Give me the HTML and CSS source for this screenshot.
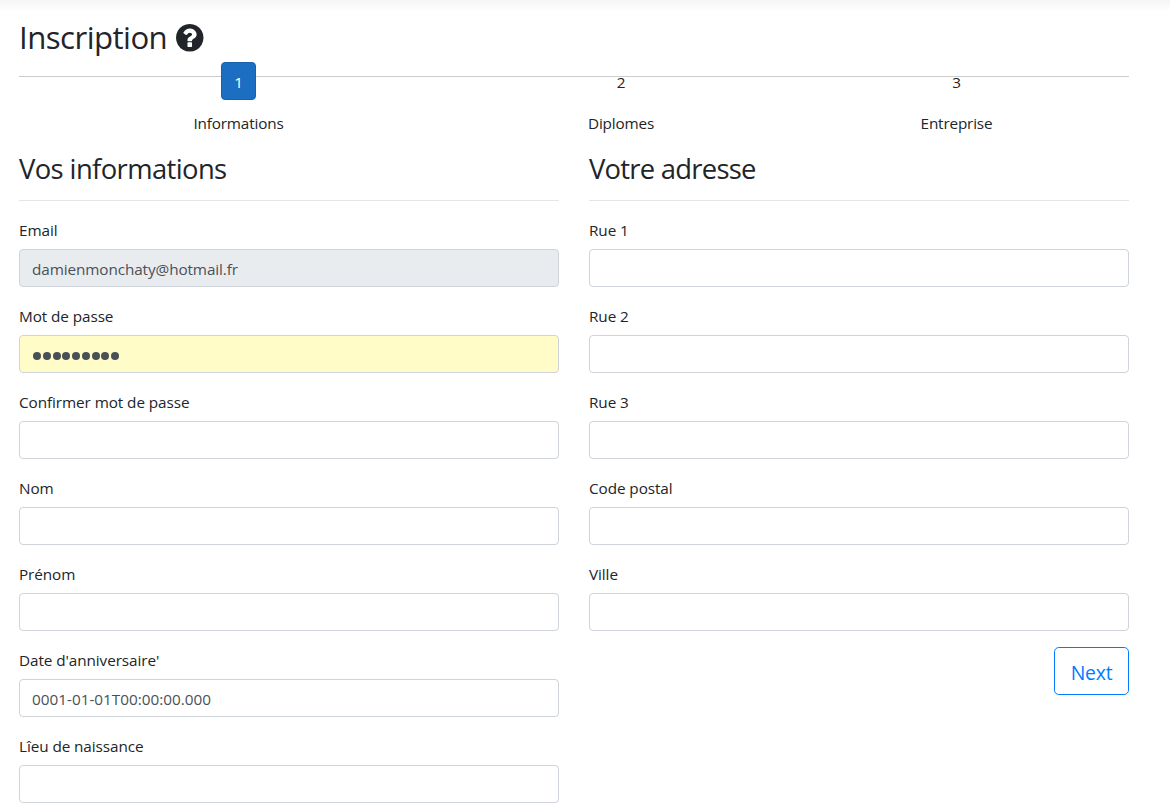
FILE: index.html
```html
<!DOCTYPE html>
<html lang="fr">
<head>
<meta charset="utf-8">
<title>Inscription</title>
<link rel="stylesheet" href="styles.css">
</head>
<body>
<main class="page">
  <h1 class="title"><span class="t-title">Inscription</span>
    <svg class="help" viewBox="128 128 1536 1536" aria-hidden="true"><path fill="currentColor" d="M1024 1376v-192q0-14-9-23t-23-9h-192q-14 0-23 9t-9 23v192q0 14 9 23t23 9h192q14 0 23-9t9-23zm256-672q0-88-55.500-163t-138.500-116-170-41q-243 0-371 213-15 24 8 42l132 100q7 6 19 6 16 0 25-12 53-68 86-92 34-24 86-24 48 0 85.500 26t37.500 59q0 38-20 61t-68 45q-63 28-115.500 86.500t-52.500 125.500v36q0 14 9 23t23 9h192q14 0 23-9t9-23q0-19 21.500-49.500t54.500-49.500q32-18 49-28.500t46-35 44.500-48 28-60.500 12.500-81zm384 192q0 209-103 385.500t-279.500 279.500-385.500 103-385.500-103-279.500-279.500-103-385.500 103-385.500 279.500-279.500 385.500-103 385.500 103 279.500 279.500 103 385.500z"/></svg>
  </h1>
  <nav class="steps">
    <div class="step step-one"><span class="dot active">1</span><p>Informations</p></div>
    <div class="step step-two"><span class="dot">2</span><p>Diplomes</p></div>
    <div class="step step-three"><span class="dot">3</span><p>Entreprise</p></div>
  </nav>
  <form class="columns">
    <section class="column">
      <h2><span>Vos informations</span></h2>
      <div class="group"><label for="email">Email</label><input id="email" class="control readonly" value="damienmonchaty@hotmail.fr" readonly></div>
      <div class="group"><label for="pass">Mot de passe</label><div id="pass" class="control filled"><span class="bullets"><i></i><i></i><i></i><i></i><i></i><i></i><i></i><i></i><i></i></span></div></div>
      <div class="group"><label for="confirm">Confirmer mot de passe</label><input id="confirm" class="control" type="password"></div>
      <div class="group"><label for="nom">Nom</label><input id="nom" class="control"></div>
      <div class="group"><label for="prenom">Prénom</label><input id="prenom" class="control"></div>
      <div class="group"><label for="date">Date d'anniversaire'</label><input id="date" class="control date" value="0001-01-01T00:00:00.000"></div>
      <div class="group"><label for="lieu">Lîeu de naissance</label><input id="lieu" class="control"></div>
    </section>
    <section class="column">
      <h2 class="address"><span>Votre adresse</span></h2>
      <div class="group"><label for="rue1">Rue 1</label><input id="rue1" class="control"></div>
      <div class="group"><label for="rue2">Rue 2</label><input id="rue2" class="control"></div>
      <div class="group"><label for="rue3">Rue 3</label><input id="rue3" class="control"></div>
      <div class="group"><label for="code">Code postal</label><input id="code" class="control"></div>
      <div class="group"><label for="ville">Ville</label><input id="ville" class="control"></div>
      <button class="next" type="button">Next</button>
    </section>
  </form>
</main>
</body>
</html>
```
FILE: styles.css
```css
* { box-sizing: border-box; }
html { overflow: hidden; }
body {
  margin: 0;
  height: 807px;
  overflow: hidden;
  background: linear-gradient(#f6f6f6, #fff 12px) no-repeat #fff;
  color: #212529;
  font: 400 15.300px/24px "Open Sans", "Noto Sans", sans-serif;
  letter-spacing: -0.080px;
}
.page { width: 1110px; margin-left: 19px; padding-top: 18px; }
.title {
  display: flex;
  align-items: center;
  gap: 9px;
  margin: 0;
  height: 40px;
  font-size: 31.200px;
  font-weight: 400;
  line-height: 38px;
  letter-spacing: -0.550px;
}
.t-title { width: 148px; height: 40px; white-space: nowrap; }
.help { width: 27.500px; height: 27.500px; }
.steps {
  display: flex;
  height: 92px;
  padding-top: 4px;
  background: linear-gradient(#ccc, #ccc) 0 18px / 100% 1px no-repeat;
}
.step { display: flex; flex-direction: column; align-items: center; }
.step-one { width: 439px; }
.step-two { width: 326px; }
.step-three { width: 345px; }
.step p { margin: 11px 0 0; letter-spacing: -0.170px; }
.dot {
  width: 35px;
  height: 38px;
  padding-top: 8px;
  border-radius: 4px;
  text-align: center;
}
.active { background: #1b6ec2; border: 1px solid #1861ac; padding-top: 7px; color: #fff; }
.columns { display: grid; grid-template-columns: 540px 540px; gap: 30px; }
h2 {
  height: 51px;
  margin: 0 0 16px;
  border-bottom: 1px solid #e5e5e5;
  font-size: 27.400px;
  font-weight: 400;
  line-height: 38px;
  letter-spacing: -0.600px;
}
.address { letter-spacing: -0.740px; }
.group { height: 70px; margin-bottom: 16px; }
label { display: block; height: 24px; margin-bottom: 8px; line-height: 26px; }
.control {
  display: block;
  width: 100%;
  height: 38px;
  padding: 1px 12px 0;
  border: 1px solid #ced4da;
  border-radius: 4px;
  background: #fff;
  color: #495057;
  font: inherit;
  letter-spacing: inherit;
}
.readonly { background: #e9ecef; letter-spacing: -0.100px; }
.date { letter-spacing: 0; }
.filled { display: flex; align-items: center; padding: 4px 13px 0; background: #fffcc8; }
.bullets { display: flex; gap: 1.750px; }
.bullets i { width: 8px; height: 8px; border-radius: 50%; background: #495057; }
.next {
  display: block;
  width: 75px;
  height: 48px;
  margin-left: auto;
  padding: 3px 0 0;
  border: 1px solid #007bff;
  border-radius: 4.800px;
  background: #fff;
  color: #007bff;
  font: 400 19.400px/28px "Open Sans", "Noto Sans", sans-serif;
  letter-spacing: -0.200px;
}
```
